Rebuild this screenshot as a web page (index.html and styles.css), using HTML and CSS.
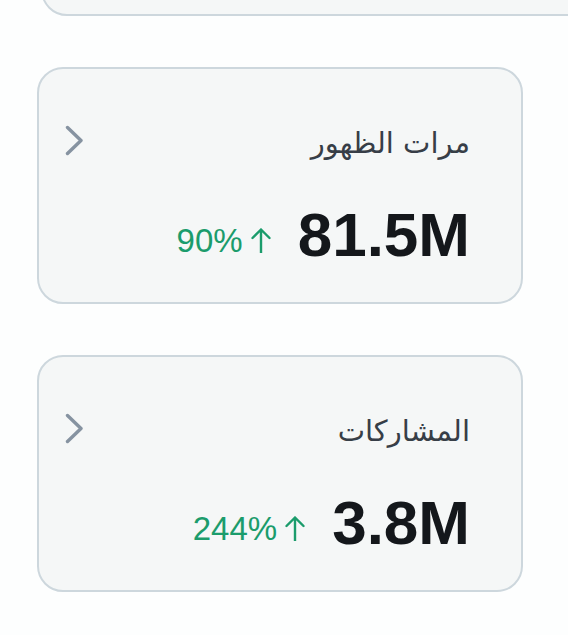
FILE: index.html
```html
<!DOCTYPE html>
<html lang="ar">
<head>
<meta charset="utf-8">
<link rel="stylesheet" href="styles.css">
</head>
<body>
<div class="page">
  <div class="card card-top"></div>

  <div class="card" dir="rtl">
    <div class="card-head">
      <span class="title">مرات الظهور</span>
      <svg class="chev" width="18" height="31" viewBox="0 0 18 31"><polyline points="2.5,2.5 16,15.5 2.5,28.5" fill="none" stroke="#8693a1" stroke-width="3.4" stroke-linecap="round" stroke-linejoin="round"/></svg>
    </div>
    <div class="card-value">
      <span class="num" dir="ltr">81.5M</span>
      <span class="change" dir="ltr">
        <span class="pct">90%</span>
        <svg class="arrow" width="20" height="26" viewBox="0 0 20 26"><path d="M10 2.5V26M1.5 11L10 2.5L18.5 11" fill="none" stroke="#1b9c6c" stroke-width="2.4" stroke-linecap="round" stroke-linejoin="round"/></svg>
      </span>
    </div>
  </div>

  <div class="card" dir="rtl">
    <div class="card-head">
      <span class="title">المشاركات</span>
      <svg class="chev" width="18" height="31" viewBox="0 0 18 31"><polyline points="2.5,2.5 16,15.5 2.5,28.5" fill="none" stroke="#8693a1" stroke-width="3.4" stroke-linecap="round" stroke-linejoin="round"/></svg>
    </div>
    <div class="card-value">
      <span class="num" dir="ltr">3.8M</span>
      <span class="change" dir="ltr">
        <span class="pct">244%</span>
        <svg class="arrow" width="20" height="26" viewBox="0 0 20 26"><path d="M10 2.5V26M1.5 11L10 2.5L18.5 11" fill="none" stroke="#1b9c6c" stroke-width="2.4" stroke-linecap="round" stroke-linejoin="round"/></svg>
      </span>
    </div>
  </div>
</div>
</body>
</html>
```

FILE: styles.css
```css
html, body {
  margin: 0;
  padding: 0;
  background: #fdfefe;
}

.page {
  box-sizing: border-box;
  width: 568px;
  height: 635px;
  overflow: hidden;
  display: flex;
  flex-direction: column;
  gap: 51px;
  padding-left: 37px;
}

.card {
  flex: none;
  box-sizing: border-box;
  width: 486px;
  height: 237px;
  background: #f5f7f7;
  border: 2px solid #cdd7dd;
  border-radius: 26px;
  padding: 56px 51px 0 26px;
  display: flex;
  flex-direction: column;
}

.card-top {
  margin-top: -221px;
  margin-left: 4px;
  width: 620px;
}

.card-head {
  display: flex;
  justify-content: space-between;
  align-items: center;
  height: 31px;
}

.title {
  font-family: "DejaVu Sans", sans-serif;
  font-size: 29px;
  color: #373e47;
  line-height: 31px;
  margin-top: 6px;
}

.chev {
  display: block;
}

.card-value {
  display: flex;
  align-items: center;
  gap: 27px;
  margin-top: 48px;
}

.num {
  font-family: "Liberation Sans", Arial, sans-serif;
  font-weight: bold;
  font-size: 62px;
  line-height: 62px;
  color: #14171b;
}

.change {
  display: flex;
  align-items: center;
  gap: 8px;
  margin-top: 10px;
  color: #1b9c6c;
}

.pct {
  font-family: "Liberation Sans", Arial, sans-serif;
  font-size: 33px;
  line-height: 33px;
}

.arrow {
  display: block;
}
```
